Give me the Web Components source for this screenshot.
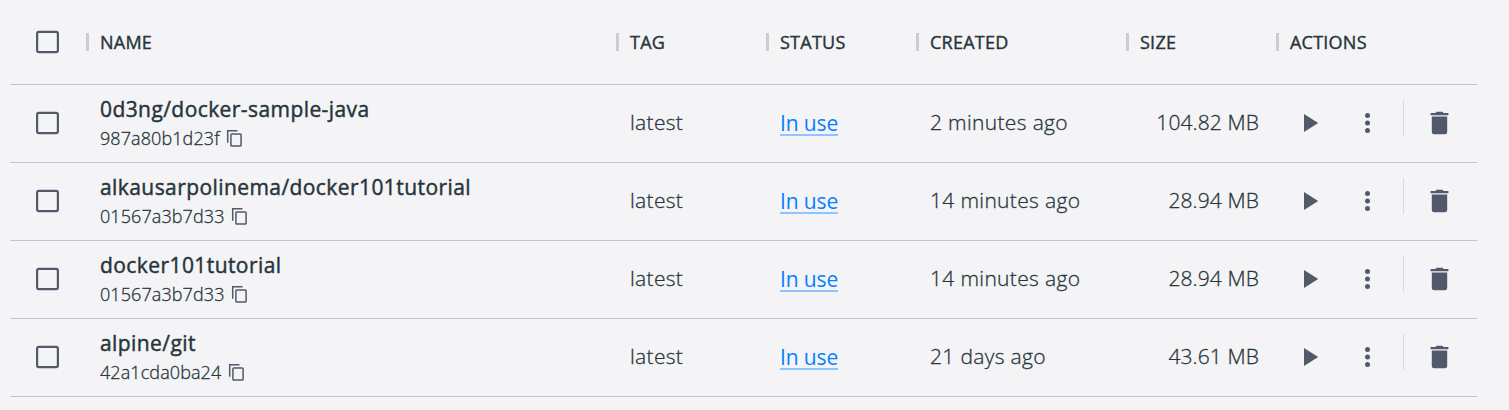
<!DOCTYPE html>
<html lang="en">
<head>
<meta charset="utf-8">
<title>Images</title>
<style>
html,body{margin:0;height:100%;overflow:hidden;background:#f4f4f6}
body{font-family:"Open Sans","Noto Sans",sans-serif;color:#27353b}
</style>
</head>
<body>
<image-table>
  <image-row name="0d3ng/docker-sample-java" hash="987a80b1d23f" created="2 minutes ago" size="104.82 MB"></image-row>
  <image-row name="alkausarpolinema/docker101tutorial" hash="01567a3b7d33" created="14 minutes ago" size="28.94 MB"></image-row>
  <image-row name="docker101tutorial" hash="01567a3b7d33" created="14 minutes ago" size="28.94 MB"></image-row>
  <image-row name="alpine/git" hash="42a1cda0ba24" created="21 days ago" size="43.61 MB"></image-row>
</image-table>
<script>
const define = (tag, html, setup) => customElements.define(tag, class extends HTMLElement {
  constructor() {
    super();
    const t = document.createElement('template');
    t.innerHTML = html;
    this.attachShadow({mode: 'open'}).append(t.content.cloneNode(true));
  }
  connectedCallback() { if (setup) setup(this, this.shadowRoot); }
});

const columns = 'display:grid;grid-template-columns:90px 530px 150px 150px 210px 150px 187px;box-sizing:border-box;width:1467px;border-bottom:1px solid #bfc6d3;';

define('check-box', `<style>
  :host{display:block;width:23px;height:24px}
  svg{display:block}
</style>
<svg width="23" height="24" viewBox="0 0 23 24"><rect x="1.1" y="1.85" width="20.8" height="20.3" rx="1.8" fill="none" stroke="#505a6b" stroke-width="2.2"/></svg>`);

const icons = {
  copy: [18, 18, '<path d="M1.7 13.7V1.8h9.8" fill="none" stroke="#505a6b" stroke-width="1.5"/><rect x="4.9" y="4.9" width="10.2" height="12.2" rx=".9" fill="none" stroke="#505a6b" stroke-width="1.5"/>'],
  play: [15, 18, '<path d="M0 0v18L14.2 9z" fill="#505a6b"/>'],
  more: [6, 20, '<g fill="#505a6b"><circle cx="3.5" cy="2.5" r="2.5"/><circle cx="3.5" cy="10" r="2.5"/><circle cx="3.5" cy="17.5" r="2.5"/></g>'],
  trash: [20, 24, '<path d="M.6 2.1h4.7L6.6.8h5.8l1.3 1.3h4.7v2.2H.6zM1.8 5.6h15.4v15.3a2.4 2.4 0 0 1-2.4 2.4H4.2a2.4 2.4 0 0 1-2.4-2.4z" fill="#505a6b"/>']
};
define('app-icon', `<style>:host{display:block;flex:none}svg{display:block}</style><div></div>`, (el, root) => {
  const [w, h, body] = icons[el.getAttribute('kind')];
  root.querySelector('div').innerHTML = `<svg width="${w}" height="${h}" viewBox="0 0 ${w} ${h}">${body}</svg>`;
});

define('column-title', `<style>
  :host{display:flex;align-items:center;margin-left:-14px;font-size:18px;line-height:24px;font-weight:400;letter-spacing:.24px;-webkit-text-stroke:.4px #27353b}
  i{width:3px;height:18px;background:#c8ced6;margin-right:11px}
</style><i></i><span><slot></slot></span>`);

define('image-row', `<style>
  :host{${columns}height:78px;padding-bottom:1px;align-items:center;font-size:21px;font-weight:300;line-height:28px;letter-spacing:.33px;-webkit-text-stroke:.3px}
  check-box{margin-left:26px}
  .name{font-size:21px;font-weight:400;line-height:30px;margin:-3px 0 2px;letter-spacing:.42px;-webkit-text-stroke:.45px}
  .id{display:flex;align-items:center;font-size:18px;line-height:24px;letter-spacing:.09px}
  .id span{height:24px}
  .id app-icon{margin-left:6.7px}
  .text,.created,.size{padding-bottom:3px}
  .status span{display:inline-block;color:#077fff;font-weight:400;letter-spacing:-.12px;-webkit-text-stroke:0;line-height:22px;border-bottom:2px solid #90c5fb}
  .status{padding-bottom:1px}
  .size{text-align:right;padding-right:31px;letter-spacing:.11px}
  .actions{display:flex;align-items:center;height:76px}
  .play{margin-left:14px}
  .more{margin-left:45px}
  .rule{width:1px;height:36px;background:#d8dbe0;margin:0 26px 10px 33px}
</style>
<check-box></check-box>
<div><div class="name"></div><div class="id"><span></span><app-icon kind="copy"></app-icon></div></div>
<div class="text">latest</div>
<div class="status"><span>In use</span></div>
<div class="created"></div>
<div class="size"></div>
<div class="actions"><app-icon class="play" kind="play"></app-icon><app-icon class="more" kind="more"></app-icon><div class="rule"></div><app-icon kind="trash"></app-icon></div>`, (el, root) => {
  root.querySelector('.name').textContent = el.getAttribute('name');
  root.querySelector('.id span').textContent = el.getAttribute('hash');
  root.querySelector('.created').textContent = el.getAttribute('created');
  root.querySelector('.size').textContent = el.getAttribute('size');
});

define('image-table', `<style>
  :host{display:block;padding-left:10px}
  header{${columns}height:85px;align-items:center}
  check-box{margin-left:26px}
</style>
<header><check-box></check-box><column-title>NAME</column-title><column-title>TAG</column-title><column-title>STATUS</column-title><column-title>CREATED</column-title><column-title>SIZE</column-title><column-title>ACTIONS</column-title></header>
<slot></slot>`);
</script>
</body>
</html>
